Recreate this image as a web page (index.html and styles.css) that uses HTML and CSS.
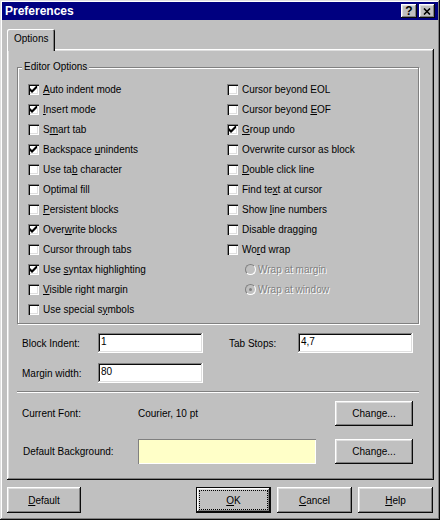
FILE: index.html
```html
<!DOCTYPE html>
<html lang="en">
<head>
    <meta charset="UTF-8">
    <title>Preferences</title>
    <link rel="stylesheet" href="styles.css">
</head>
<body>

    <div class="window">
        <!-- Barra de título -->
        <div class="titlebar">
            <span class="title">Preferences</span>
            <div class="title-buttons">
                <span class="tbtn">?</span>
                <span class="tbtn">
                    <svg width="8" height="7" viewBox="0 0 8 7"><path d="M1 0.5L7 6.5M7 0.5L1 6.5" stroke="#000" stroke-width="1.6"/></svg>
                </span>
            </div>
        </div>

        <div class="body">
            <div class="tabs">
                <div class="tab">Options</div>
            </div>

            <div class="panel">
                <fieldset class="group">
                    <legend>Editor Options</legend>
                    <div class="options">
                        <div class="check"><span class="box"><svg class="tick" viewBox="0 0 7 7"><path d="M0 2l2 2 5-5v3l-5 5-2-2z"/></svg></span><span><u>A</u>uto indent mode</span></div>
                        <div class="check"><span class="box"><svg class="tick" viewBox="0 0 7 7"><path d="M0 2l2 2 5-5v3l-5 5-2-2z"/></svg></span><span><u>I</u>nsert mode</span></div>
                        <div class="check"><span class="box"></span><span>S<u>m</u>art tab</span></div>
                        <div class="check"><span class="box"><svg class="tick" viewBox="0 0 7 7"><path d="M0 2l2 2 5-5v3l-5 5-2-2z"/></svg></span><span>Backspace <u>u</u>nindents</span></div>
                        <div class="check"><span class="box"></span><span>Use ta<u>b</u> character</span></div>
                        <div class="check"><span class="box"></span><span>Optimal fill</span></div>
                        <div class="check"><span class="box"></span><span><u>P</u>ersistent blocks</span></div>
                        <div class="check"><span class="box"><svg class="tick" viewBox="0 0 7 7"><path d="M0 2l2 2 5-5v3l-5 5-2-2z"/></svg></span><span>Over<u>w</u>rite blocks</span></div>
                        <div class="check"><span class="box"></span><span>Cursor through tabs</span></div>
                        <div class="check"><span class="box"><svg class="tick" viewBox="0 0 7 7"><path d="M0 2l2 2 5-5v3l-5 5-2-2z"/></svg></span><span>Use <u>s</u>yntax highlighting</span></div>
                        <div class="check"><span class="box"></span><span><u>V</u>isible right margin</span></div>
                        <div class="check"><span class="box"></span><span>Use special s<u>y</u>mbols</span></div>

                        <div class="check"><span class="box"></span><span>Cursor beyond EOL</span></div>
                        <div class="check"><span class="box"></span><span>Cursor beyond <u>E</u>OF</span></div>
                        <div class="check"><span class="box"><svg class="tick" viewBox="0 0 7 7"><path d="M0 2l2 2 5-5v3l-5 5-2-2z"/></svg></span><span><u>G</u>roup undo</span></div>
                        <div class="check"><span class="box"></span><span>Overwrite cursor as block</span></div>
                        <div class="check"><span class="box"></span><span><u>D</u>ouble click line</span></div>
                        <div class="check"><span class="box"></span><span>Find te<u>x</u>t at cursor</span></div>
                        <div class="check"><span class="box"></span><span>Show <u>l</u>ine numbers</span></div>
                        <div class="check"><span class="box"></span><span>Disable dragging</span></div>
                        <div class="check"><span class="box"></span><span>Wo<u>r</u>d wrap</span></div>
                        <div class="check radio-item disabled"><span class="radio"></span><span>Wrap at margin</span></div>
                        <div class="check radio-item disabled"><span class="radio selected"></span><span>Wrap at window</span></div>
                    </div>
                </fieldset>

                <div class="fields">
                    <span>Block Indent:</span>
                    <div class="field">1</div>
                    <span></span>
                    <span>Tab Stops:</span>
                    <div class="field">4,7</div>
                    <span>Margin width:</span>
                    <div class="field">80</div>
                </div>

                <div class="sep"></div>

                <div class="row">
                    <span class="row-label">Current Font:</span>
                    <span class="row-value">Courier, 10 pt</span>
                    <button class="button change">Change...</button>
                </div>

                <div class="row row-bg">
                    <span class="row-label">Default Background:</span>
                    <span class="swatch"></span>
                    <button class="button change">Change...</button>
                </div>
            </div>

            <div class="actions">
                <button class="button"><u>D</u>efault</button>
                <span class="spacer"></span>
                <button class="button default"><span class="focus"><span><u>O</u>K</span></span></button>
                <button class="button"><u>C</u>ancel</button>
                <button class="button"><u>H</u>elp</button>
            </div>
        </div>
    </div>

</body>
</html>
```

FILE: styles.css
```css
body {
    margin: 0;
    font-family: "Liberation Sans", Arial, sans-serif;
    font-size: 10px;
    color: #000;
    background-color: #c0c0c0;
}

.window {
    width: 440px;
    height: 520px;
    box-sizing: border-box;
    padding: 2px;
    background-color: #c0c0c0;
    box-shadow: inset -1px -1px #0a0a0a, inset 1px 1px #dfdfdf, inset -2px -2px #808080, inset 2px 2px #fff;
}

.titlebar {
    height: 18px;
    background-color: #000080;
    display: flex;
    align-items: center;
    justify-content: space-between;
    padding: 0 3px 0 3px;
}

.title {
    color: #fff;
    font-weight: bold;
    font-size: 12px;
}

.title-buttons {
    display: flex;
    gap: 2px;
}

.tbtn {
    width: 16px;
    height: 14px;
    display: flex;
    align-items: center;
    justify-content: center;
    font-weight: bold;
    font-size: 12px;
    background-color: #c0c0c0;
    box-shadow: inset -1px -1px #0a0a0a, inset 1px 1px #fff, inset -2px -2px #808080, inset 2px 2px #dfdfdf;
}

.body {
    padding: 9px 4px 0 5px;
}

.tabs {
    display: flex;
}

.tab {
    position: relative;
    z-index: 1;
    height: 22px;
    line-height: 20px;
    box-sizing: border-box;
    padding: 0 7px 2px 7px;
    margin-bottom: -2px;
    background-color: #c0c0c0;
    border-radius: 2px 2px 0 0;
    box-shadow: inset 1px 1px #fff, inset -1px 0 #0a0a0a, inset -2px 0 #808080;
}

.panel {
    height: 431px;
    box-sizing: border-box;
    padding: 2px;
    box-shadow: inset -1px -1px #0a0a0a, inset 1px 1px #fff, inset -2px -2px #808080, inset 2px 2px #dfdfdf;
}

.group {
    margin: 10px 0 0 8px;
    padding: 6px 0 4px 0;
    width: 402px;
    min-width: 0;
    box-sizing: border-box;
    border: 1px solid #808080;
    box-shadow: 1px 1px 0 #fff, inset 1px 1px 0 #fff;
}

.group legend {
    margin-left: 4px;
    padding: 0 2px;
    line-height: 12px;
    background-color: #c0c0c0;
}

.options {
    display: grid;
    grid-template-columns: 199px auto;
    grid-template-rows: repeat(12, 20px);
    grid-auto-flow: column;
    padding-left: 10px;
}

.check {
    display: flex;
    align-items: center;
    white-space: nowrap;
}

.box {
    width: 11px;
    height: 11px;
    flex: none;
    box-sizing: border-box;
    padding: 2px;
    margin-right: 4px;
    background-color: #fff;
    box-shadow: inset 1px 1px #808080, inset 2px 2px #0a0a0a, inset -1px -1px #fff, inset -2px -2px #dfdfdf;
}

.tick {
    display: block;
    width: 7px;
    height: 7px;
}

.radio-item {
    padding-left: 18px;
}

.radio {
    width: 11px;
    height: 11px;
    flex: none;
    box-sizing: border-box;
    margin-right: 2px;
    border-radius: 50%;
    border: 1px solid;
    border-color: #808080 #fff #fff #808080;
    background-color: #c0c0c0;
    display: flex;
    align-items: center;
    justify-content: center;
}

.radio.selected::after {
    content: "";
    width: 3px;
    height: 3px;
    border-radius: 50%;
    background-color: #808080;
}

.disabled {
    color: #808080;
    text-shadow: 1px 1px 0 #fff;
}

.fields {
    display: grid;
    grid-template-columns: 76px 105px 26px 69px 115px;
    grid-auto-rows: 20px;
    row-gap: 10px;
    align-items: center;
    margin-top: 9px;
    padding-left: 13px;
}

.field {
    height: 20px;
    line-height: 18px;
    box-sizing: border-box;
    padding-left: 3px;
    background-color: #fff;
    box-shadow: inset -1px -1px #fff, inset 1px 1px #808080, inset -2px -2px #dfdfdf, inset 2px 2px #0a0a0a;
}

.sep {
    margin: 8px 0 0 8px;
    width: 402px;
    border-top: 1px solid #808080;
    border-bottom: 1px solid #fff;
}

.row {
    display: flex;
    align-items: center;
    width: 391px;
    margin: 8px 0 0 13px;
}

.row-bg {
    margin-top: 13px;
}

.row-label {
    width: 116px;
    flex: none;
}

.row-bg .row-label {
    box-sizing: border-box;
    padding-left: 3px;
    width: 118px;
    margin-left: -2px;
}

.row-value {
    flex: 1;
}

.swatch {
    width: 178px;
    height: 25px;
    background-color: #ffffc8;
    box-shadow: inset 1px 1px #808080, inset -1px -1px #fff;
}

.button {
    font-family: inherit;
    font-size: 10px;
    color: #000;
    border: none;
    padding: 0;
    width: 75px;
    height: 26px;
    background-color: #c0c0c0;
    box-shadow: inset -1px -1px #0a0a0a, inset 1px 1px #fff, inset -2px -2px #808080, inset 2px 2px #dfdfdf;
}

.change {
    width: 78px;
    height: 25px;
    margin-left: auto;
}

.actions {
    display: flex;
    gap: 6px;
    margin-top: 7px;
    padding-right: 1px;
}

.actions .button:first-child {
    width: 74px;
}

.spacer {
    flex: 1;
}

.button.default {
    box-shadow: inset -2px -2px #0a0a0a, inset 1px 1px #0a0a0a, inset 2px 2px #fff, inset -3px -3px #808080, inset 3px 3px #dfdfdf;
    padding: 4px;
}

.focus {
    display: flex;
    align-items: center;
    justify-content: center;
    height: 100%;
    outline: 1px dotted #000;
}
```
